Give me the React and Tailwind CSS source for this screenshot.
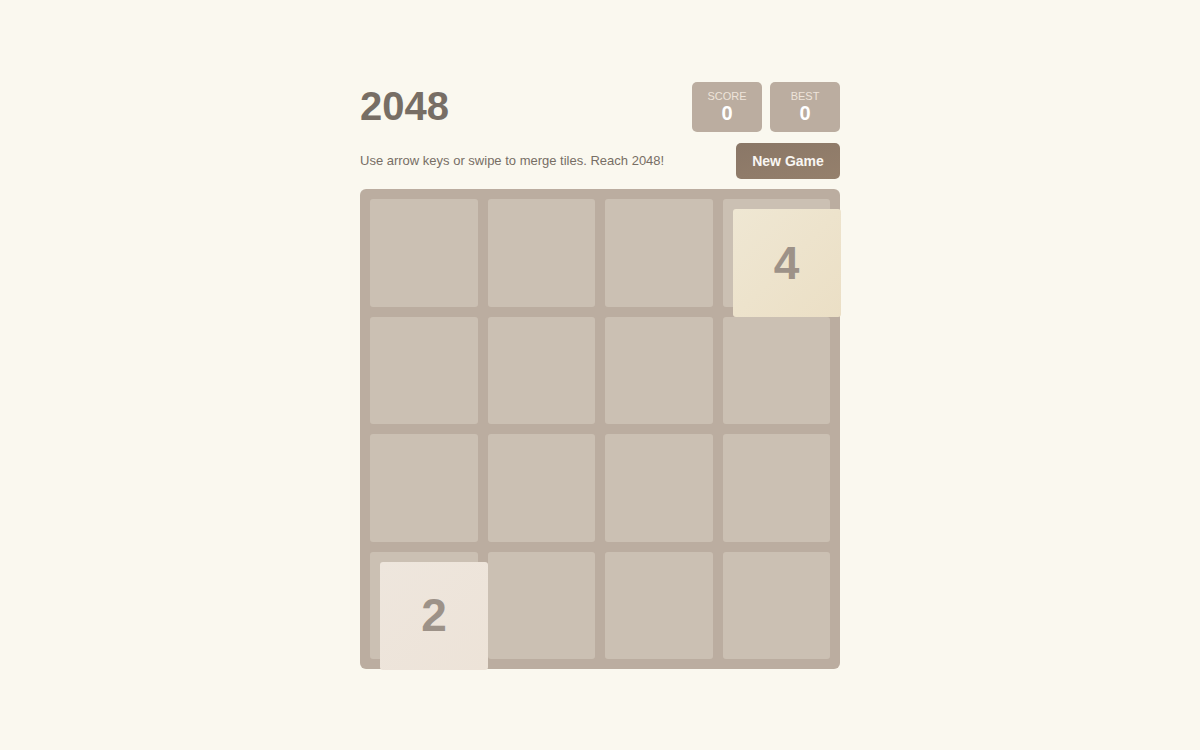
import { useState } from "react";

const SIZE = 4;
const CELL = 107.5;
const GAP = 10;

const TILE_STYLES = {
  2: "bg-gradient-to-br from-[#eee6dd] to-[#ede3d8]",
  4: "bg-gradient-to-br from-[#efe7d3] to-[#ebdfc5]",
};

function ScoreBox({ label, value }) {
  return (
    <div className="flex h-[50px] w-[70px] flex-col items-center rounded-[5px] bg-[#bbada0] pt-[8px]">
      <span className="text-[11px] leading-[13px] text-[#eee4da]">{label}</span>
      <span className="-mt-px text-[20px] font-bold leading-[22px] text-white">{value}</span>
    </div>
  );
}

export default function App() {
  const [tiles] = useState([
    { id: 1, value: 4, row: 0, col: 3 },
    { id: 2, value: 2, row: 3, col: 0 },
  ]);

  return (
    <div className="min-h-[750px] w-full bg-[#faf8ef] font-['Liberation_Sans',Arial,sans-serif] text-[#776e65]">
      <div className="mx-auto w-[480px] pt-[82px]">
        <div className="flex items-start justify-between">
          <h1 className="text-[40px] font-bold leading-[48px] text-[#776e65]">2048</h1>
          <div className="flex gap-2">
            <ScoreBox label="SCORE" value={0} />
            <ScoreBox label="BEST" value={0} />
          </div>
        </div>

        <div className="mt-[11px] flex items-center justify-between">
          <p className="text-[13px] text-[#776e65]">
            Use arrow keys or swipe to merge tiles. Reach 2048!
          </p>
          <button
            type="button"
            className="h-[36px] w-[104px] rounded-[5px] bg-gradient-to-br from-[#8a7767] to-[#95806c] text-[14px] font-bold text-[#f9f6f2]"
          >
            New Game
          </button>
        </div>

        <div className="relative mt-[10px] h-[480px] w-[480px] rounded-[6px] bg-[#bbada0] p-[10px]">
          <div className="grid h-full grid-cols-4 grid-rows-4 gap-[10px]">
            {Array.from({ length: SIZE * SIZE }).map((_, i) => (
              <div key={i} className="rounded-[3px] bg-[#cbc0b3]" />
            ))}
          </div>
          {tiles.map((t) => (
            <div
              key={t.id}
              className={`absolute flex h-[108px] w-[108px] items-center justify-center rounded-[3px] text-[46px] font-bold text-[#9d9288] ${TILE_STYLES[t.value]}`}
              style={{
                left: 20 + t.col * (CELL + GAP),
                top: 20 + t.row * (CELL + GAP),
              }}
            >
              {t.value}
            </div>
          ))}
        </div>
      </div>
    </div>
  );
}
